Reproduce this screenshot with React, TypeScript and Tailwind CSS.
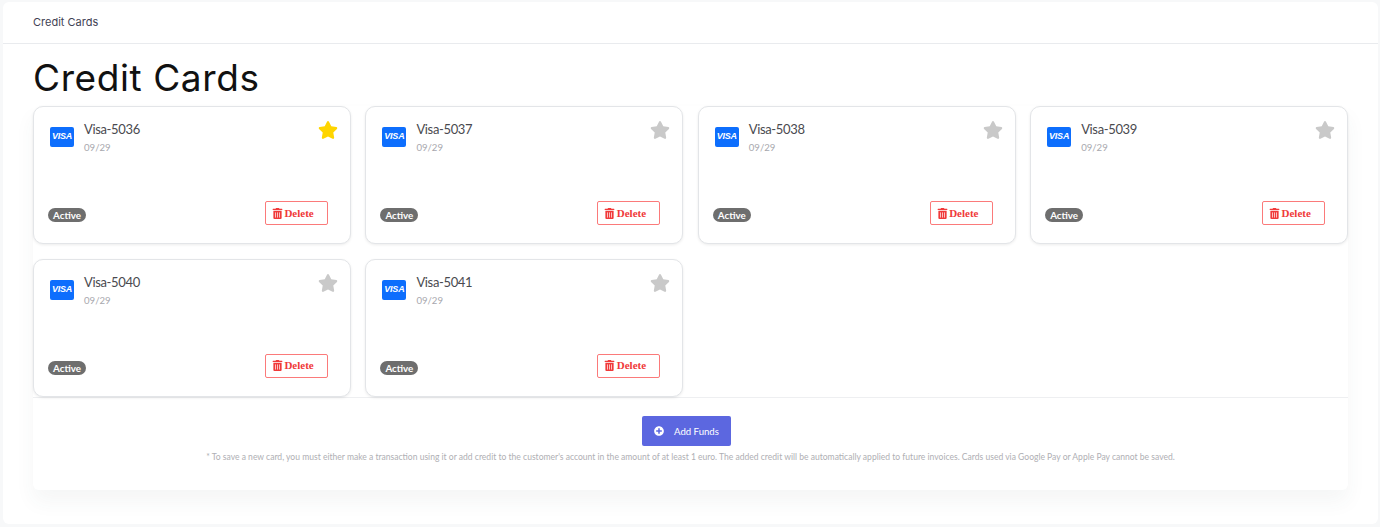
import React from 'react'

import { FaPlusCircle, FaStar, FaTrashAlt } from 'react-icons/fa'

const cards = [
  { id: 5036, favourite: true },
  { id: 5037, favourite: false },
  { id: 5038, favourite: false },
  { id: 5039, favourite: false },
  { id: 5040, favourite: false },
  { id: 5041, favourite: false }
]

function CreditCard({ id, favourite }: { id: number; favourite: boolean }) {
  return (
    <div className="flex h-[138px] flex-col justify-between rounded-[10px] border border-[#e3e5e8] bg-white pt-[12px] pr-[12px] pb-[18px] pl-[15px] shadow-[0_1px_3px_rgba(0,0,0,0.08)]">
      <div className="flex items-start justify-between">
        <div className="flex items-start">
          <div className="mt-[8px] ml-[1px] flex h-[20px] w-[24px] items-center justify-center rounded-[2px] bg-[#0d6efd] font-['Liberation_Sans',sans-serif] text-[9px] font-bold italic tracking-[-0.2px] text-white">
            VISA
          </div>
          <div className="ml-[10px] font-['Lato',sans-serif]">
            <div className="text-[13px] leading-[20px] tracking-[-0.35px] text-[#4a4a4f]">Visa-{id}</div>
            <div className="mt-[2px] text-[9.6px] leading-[14px] text-[#a8a8ae]">09/29</div>
          </div>
        </div>
        <FaStar className={favourite ? 'mt-[1px] text-[20px] text-[#ffd500]' : 'mt-[1px] text-[20px] text-[#c9c9c9]'} />
      </div>
      <div className="flex items-center justify-between pr-[10px]">
        <span className="-ml-[1px] mt-[4px] rounded-full bg-[#6e6e6e] px-[5px] font-['Lato',sans-serif] text-[9.8px] leading-[14px] font-bold text-white">
          Active
        </span>
        <button className="flex h-[24px] w-[63px] items-center rounded-[2px] border border-[#fb7a7a] bg-white pl-[6px] font-['Liberation_Serif',serif] text-[11px] font-bold text-[#f03a3a]">
          <FaTrashAlt className="mr-[1.5px] text-[11px]" />
          Delete
        </button>
      </div>
    </div>
  )
}

export default function App() {
  return (
    <div className="h-[527px] overflow-hidden bg-[#f7f8f9] pt-[2px] pr-[2px] pl-[3px]">
      <div className="h-[522px] rounded-[6px] bg-white">
        <div className="flex h-[42px] items-center border-b border-[#e9ebee] pl-[30px] font-['Inter',sans-serif] text-[11px] font-normal text-[#3f4254]">
          Credit Cards
        </div>
        <h1 className="mt-[10px] h-[52px] pl-[30px] font-['Inter',sans-serif] text-[37px] leading-[48px] font-normal tracking-[0.6px] text-[#111]">
          Credit Cards
        </h1>
        <div className="ml-[30px] w-[1315px] rounded-b-[6px] bg-white shadow-[0_12px_20px_rgba(60,70,80,0.05)]">
          <div className="grid grid-cols-4 gap-[14.5px]">
            {cards.map(card => (
              <CreditCard key={card.id} id={card.id} favourite={card.favourite} />
            ))}
          </div>
          <div className="flex h-[93px] flex-col items-center border-t border-[#eeeff1] pt-[18px]">
            <button className="mr-[8px] flex h-[30px] w-[89px] items-center rounded-[2px] bg-[#5c67e0] pl-[12px] font-['Lato',sans-serif] text-[9.6px] text-white">
              <FaPlusCircle className="mr-[10px] text-[10px]" />
              <span className="mt-[3px]">Add Funds</span>
            </button>
            <p className="mt-[4px] font-['Lato',sans-serif] text-[8.55px] leading-[14px] text-[#afafb4]">
              * To save a new card, you must either make a transaction using it or add credit to the customer's account in the amount of at least 1 euro. The added credit will be automatically applied to future invoices. Cards used via Google Pay or Apple Pay cannot be saved.
            </p>
          </div>
        </div>
      </div>
    </div>
  )
}
